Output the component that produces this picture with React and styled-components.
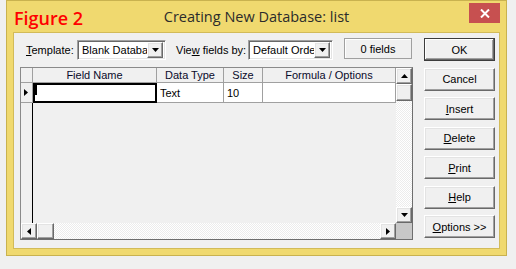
import React from "react";
import styled, { createGlobalStyle, css } from "styled-components";

const Global = createGlobalStyle`
  html, body { margin: 0; padding: 0; background: #f0f0f0; }
  body { font-family: "Liberation Sans", Arial, sans-serif; font-size: 11px; color: #000; }
`;

const raised = css`
  box-sizing: border-box;
  background: #f0f0f0;
  border: 1px solid;
  border-color: #fff #696969 #696969 #fff;
  box-shadow: inset -1px -1px #a0a0a0, inset 1px 1px #e3e3e3;
`;

const Window = styled.div`
  box-sizing: border-box;
  margin-left: 6px;
  width: 501px;
  height: 256px;
  background: #f0d96f;
  border: 1px solid #c9b24f;
  display: flex;
  flex-direction: column;
`;

const TitleBar = styled.div`
  height: 31px;
  display: grid;
  grid-template-columns: 1fr auto 1fr;
  align-items: start;
`;

const FigureLabel = styled.div`
  font-family: "Open Sans", "Noto Sans", sans-serif;
  font-size: 18px;
  font-weight: 600;
  line-height: 20px;
  color: #ff0000;
  padding: 7px 0 0 7px;
  white-space: nowrap;
`;

const Title = styled.div`
  font-family: "Open Sans", "Noto Sans", sans-serif;
  font-size: 14.5px;
  line-height: 18px;
  color: #2b2b2b;
  padding-top: 7px;
  white-space: nowrap;
`;

const CloseButton = styled.div`
  justify-self: end;
  margin: 2px 6px 0 0;
  width: 31px;
  height: 20px;
  background: #c75050;
  display: flex;
  align-items: center;
  justify-content: center;
`;

const Client = styled.div`
  flex: 1;
  margin: 0 6px 6px 6px;
  box-sizing: border-box;
  border: 1px solid #d2bb59;
  background: #f0f0f0;
  display: flex;
  padding: 5px 4px 0 6px;
  gap: 11px;
`;

const LeftCol = styled.div`
  width: 393px;
  display: flex;
  flex-direction: column;
  gap: 6px;
`;

const Toolbar = styled.div`
  height: 23px;
  display: flex;
  align-items: center;
`;

const Label = styled.span`
  width: ${(p) => p.$w}px;
  margin-left: ${(p) => p.$ml}px;
  white-space: nowrap;
  flex: none;
`;

const U = styled.span`
  text-decoration: underline;
`;

const Combo = styled.div`
  box-sizing: border-box;
  width: ${(p) => p.$w}px;
  margin-left: ${(p) => p.$ml}px;
  height: 20px;
  background: #fff;
  border: 1px solid;
  border-color: #a0a0a0 #fff #fff #a0a0a0;
  box-shadow: inset 1px 1px #696969, inset -1px -1px #e3e3e3;
  display: flex;
  align-items: center;
  padding: 2px 2px 2px 4px;
  flex: none;
`;

const ComboText = styled.span`
  flex: 1;
  overflow: hidden;
  white-space: nowrap;
`;

const ComboButton = styled.div`
  ${raised};
  width: 16px;
  height: 16px;
  display: flex;
  align-items: center;
  justify-content: center;
  flex: none;
`;

const CountBox = styled.div`
  box-sizing: border-box;
  margin-left: ${(p) => p.$ml}px;
  width: 68px;
  height: 21px;
  margin-top: -2px;
  border: 1px solid #a0a0a0;
  box-shadow: inset 1px 1px #fff;
  background: #f0f0f0;
  display: flex;
  align-items: center;
  justify-content: center;
  flex: none;
`;

const GridFrame = styled.div`
  box-sizing: border-box;
  width: 393px;
  height: 173px;
  border: 1px solid #6e6e6e;
  border-top-color: #8a8a8a;
  border-left-color: #8a8a8a;
  display: grid;
  grid-template-columns: 375px 16px;
  grid-template-rows: 155px 16px;
  background: #f0f0f0;
`;

const Table = styled.div`
  display: grid;
  grid-template-columns: 12px 124px 67px 39px 133px;
  grid-template-rows: 15px 20px 1fr;
  overflow: hidden;
`;

const HeadCell = styled.div`
  box-sizing: border-box;
  background: #f0f0f0;
  border-right: 1px solid #a0a0a0;
  border-bottom: 1px solid #a0a0a0;
  text-align: center;
  line-height: 14px;
  white-space: nowrap;
  color: #0a0a2a;
`;

const IndicatorCell = styled.div`
  box-sizing: border-box;
  background: #f0f0f0;
  border-right: 1px solid #a0a0a0;
  border-bottom: 1px solid #a0a0a0;
  display: flex;
  align-items: center;
  padding-left: 3px;
`;

const DataCell = styled.div`
  box-sizing: border-box;
  background: #fff;
  border-right: 1px solid #a0a0a0;
  border-bottom: 1px solid #a0a0a0;
  padding: 4px 0 0 3px;
  line-height: 13px;
  white-space: nowrap;
`;

const FocusCell = styled.div`
  box-sizing: border-box;
  background: #fff;
  border: 2px solid #000;
`;

const Caret = styled.div`
  width: 2px;
  height: 10px;
  background: #000;
`;

const IndicatorFill = styled.div`
  border-right: 1px solid #000;
`;

const VScroll = styled.div`
  display: flex;
  flex-direction: column;
  background: repeating-conic-gradient(#ffffff 0 25%, #ececec 0 50%) 0 0 / 2px 2px;
`;

const HScroll = styled.div`
  display: flex;
  background: repeating-conic-gradient(#ffffff 0 25%, #ececec 0 50%) 0 0 / 2px 2px;
`;

const ScrollBtn = styled.div`
  ${raised};
  width: ${(p) => p.$w || 16}px;
  height: ${(p) => p.$h || 16}px;
  display: flex;
  align-items: center;
  justify-content: center;
  flex: none;
`;

const Spacer = styled.div`
  flex: 1;
`;

const Corner = styled.div`
  background: #c8c8c8;
`;

const RightCol = styled.div`
  width: 71px;
  height: 200px;
  display: flex;
  flex-direction: column;
  justify-content: space-between;
`;

const DlgButton = styled.div`
  ${raised};
  height: 23px;
  display: flex;
  align-items: center;
  justify-content: center;
  white-space: nowrap;
  ${(p) =>
    p.$default &&
    css`
      border: 1px solid #3c3c3c;
      box-shadow: inset -1px -1px #696969, inset 1px 1px #fff, inset -2px -2px #a0a0a0;
    `}
`;

const Down = () => (
  <svg width="7" height="4" viewBox="0 0 7 4">
    <polygon points="0,0 7,0 3.5,4" fill="#000" />
  </svg>
);
const Up = () => (
  <svg width="7" height="4" viewBox="0 0 7 4">
    <polygon points="0,4 7,4 3.5,0" fill="#000" />
  </svg>
);
const Left = () => (
  <svg width="4" height="7" viewBox="0 0 4 7">
    <polygon points="4,0 4,7 0,3.5" fill="#000" />
  </svg>
);
const Right = () => (
  <svg width="4" height="7" viewBox="0 0 4 7">
    <polygon points="0,0 0,7 4,3.5" fill="#000" />
  </svg>
);

export default function App() {
  return (
    <>
      <Global />
      <Window>
        <TitleBar>
          <FigureLabel>Figure 2</FigureLabel>
          <Title>Creating New Database: list</Title>
          <CloseButton>
            <svg width="10" height="9" viewBox="0 0 10 9">
              <path d="M1 0.5 L9 8.5 M9 0.5 L1 8.5" stroke="#fff" strokeWidth="2" />
            </svg>
          </CloseButton>
        </TitleBar>
        <Client>
          <LeftCol>
            <Toolbar>
              <Label $w={46} $ml={6}>
                <U>T</U>emplate:
              </Label>
              <Combo $w={89} $ml={5}>
                <ComboText>Blank Database</ComboText>
                <ComboButton>
                  <Down />
                </ComboButton>
              </Combo>
              <Label $w={67} $ml={10}>
                Vie<U>w</U> fields by:
              </Label>
              <Combo $w={85} $ml={5}>
                <ComboText>Default Order</ComboText>
                <ComboButton>
                  <Down />
                </ComboButton>
              </Combo>
              <CountBox $ml={11}>0 fields</CountBox>
            </Toolbar>
            <GridFrame>
              <Table>
                <HeadCell />
                <HeadCell>Field Name</HeadCell>
                <HeadCell>Data Type</HeadCell>
                <HeadCell>Size</HeadCell>
                <HeadCell>Formula / Options</HeadCell>
                <IndicatorCell>
                  <Right />
                </IndicatorCell>
                <FocusCell>
                  <Caret />
                </FocusCell>
                <DataCell>Text</DataCell>
                <DataCell>10</DataCell>
                <DataCell />
                <IndicatorFill />
              </Table>
              <VScroll>
                <ScrollBtn>
                  <Up />
                </ScrollBtn>
                <ScrollBtn $h={17} />
                <Spacer />
                <ScrollBtn>
                  <Down />
                </ScrollBtn>
              </VScroll>
              <HScroll>
                <ScrollBtn>
                  <Left />
                </ScrollBtn>
                <ScrollBtn $w={17} />
                <Spacer />
                <ScrollBtn>
                  <Right />
                </ScrollBtn>
              </HScroll>
              <Corner />
            </GridFrame>
          </LeftCol>
          <RightCol>
            <DlgButton $default>OK</DlgButton>
            <DlgButton>Cancel</DlgButton>
            <DlgButton>
              <U>I</U>nsert
            </DlgButton>
            <DlgButton>
              <U>D</U>elete
            </DlgButton>
            <DlgButton>
              <U>P</U>rint
            </DlgButton>
            <DlgButton>
              <U>H</U>elp
            </DlgButton>
            <DlgButton>
              <U>O</U>ptions &gt;&gt;
            </DlgButton>
          </RightCol>
        </Client>
      </Window>
    </>
  );
}
